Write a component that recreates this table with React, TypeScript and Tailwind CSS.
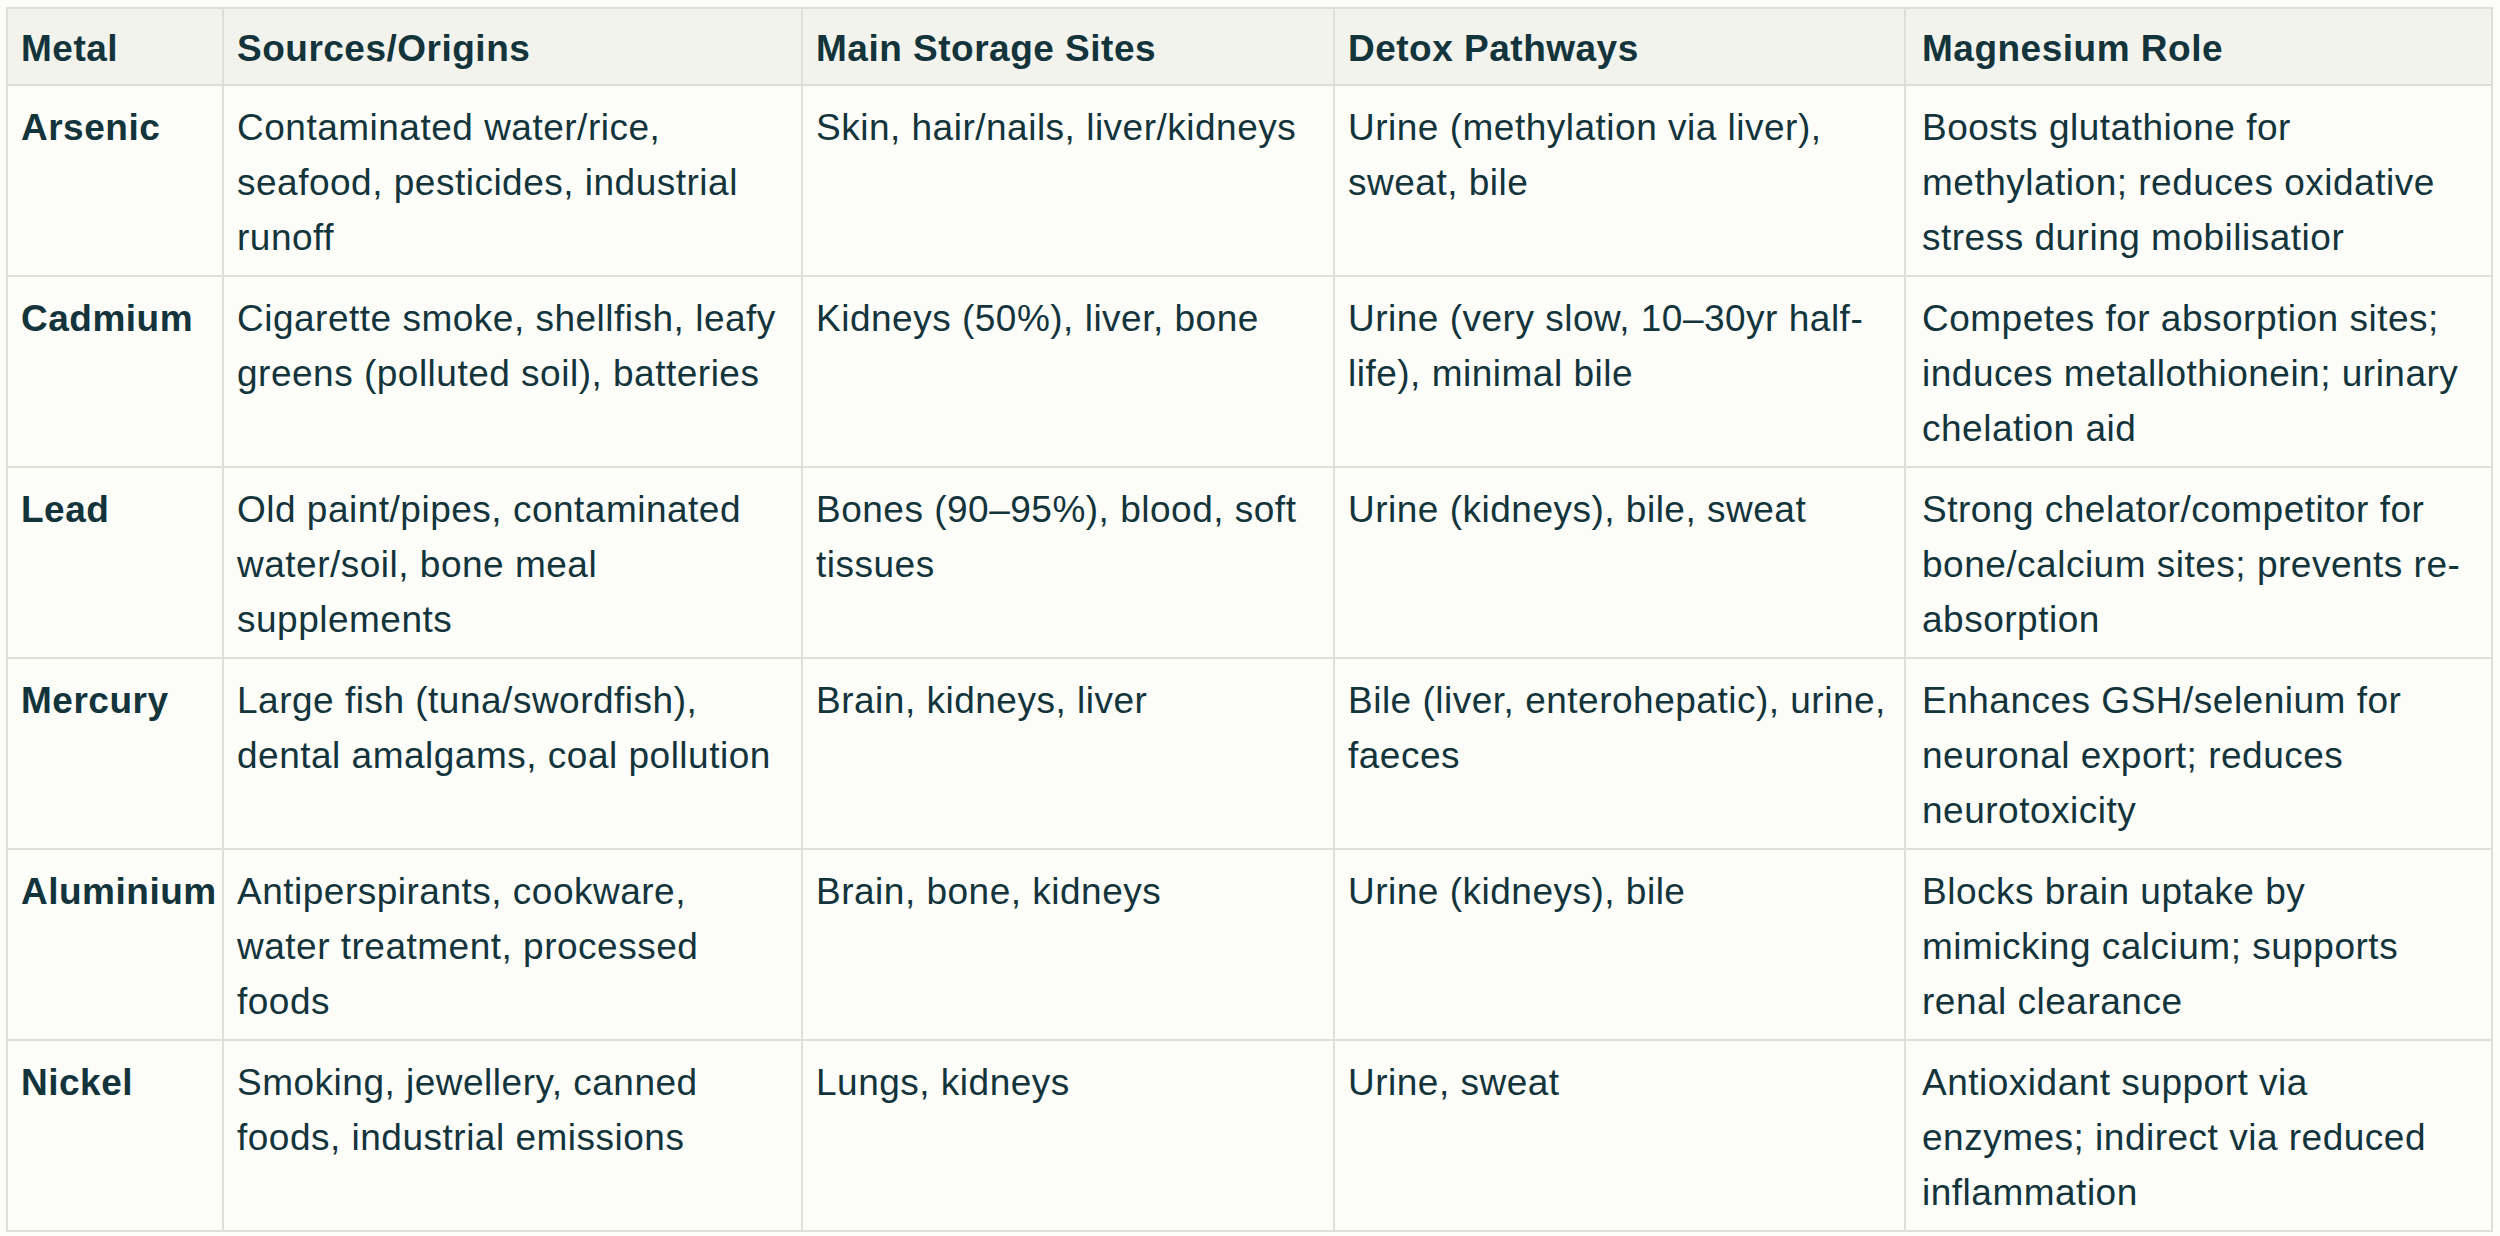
import React from "react";

type Row = {
  metal: string;
  sources: string[];
  storage: string[];
  detox: string[];
  magnesium: string[];
};

const headers = ["Metal", "Sources/Origins", "Main Storage Sites", "Detox Pathways", "Magnesium Role"];

// line breaks kept as in the screenshot so the wrapping matches
const rows: Row[] = [
  {
    metal: "Arsenic",
    sources: ["Contaminated water/rice,", "seafood, pesticides, industrial", "runoff"],
    storage: ["Skin, hair/nails, liver/kidneys"],
    detox: ["Urine (methylation via liver),", "sweat, bile"],
    magnesium: ["Boosts glutathione for", "methylation; reduces oxidative", "stress during mobilisatior"],
  },
  {
    metal: "Cadmium",
    sources: ["Cigarette smoke, shellfish, leafy", "greens (polluted soil), batteries"],
    storage: ["Kidneys (50%), liver, bone"],
    detox: ["Urine (very slow, 10–30yr half-", "life), minimal bile"],
    magnesium: ["Competes for absorption sites;", "induces metallothionein; urinary", "chelation aid"],
  },
  {
    metal: "Lead",
    sources: ["Old paint/pipes, contaminated", "water/soil, bone meal", "supplements"],
    storage: ["Bones (90–95%), blood, soft", "tissues"],
    detox: ["Urine (kidneys), bile, sweat"],
    magnesium: ["Strong chelator/competitor for", "bone/calcium sites; prevents re-", "absorption"],
  },
  {
    metal: "Mercury",
    sources: ["Large fish (tuna/swordfish),", "dental amalgams, coal pollution"],
    storage: ["Brain, kidneys, liver"],
    detox: ["Bile (liver, enterohepatic), urine,", "faeces"],
    magnesium: ["Enhances GSH/selenium for", "neuronal export; reduces", "neurotoxicity"],
  },
  {
    metal: "Aluminium",
    sources: ["Antiperspirants, cookware,", "water treatment, processed", "foods"],
    storage: ["Brain, bone, kidneys"],
    detox: ["Urine (kidneys), bile"],
    magnesium: ["Blocks brain uptake by", "mimicking calcium; supports", "renal clearance"],
  },
  {
    metal: "Nickel",
    sources: ["Smoking, jewellery, canned", "foods, industrial emissions"],
    storage: ["Lungs, kidneys"],
    detox: ["Urine, sweat"],
    magnesium: ["Antioxidant support via", "enzymes; indirect via reduced", "inflammation"],
  },
];

const padX = ["pl-[13px] pr-2", "pl-[13px] pr-2", "pl-[13px] pr-2", "pl-[13px] pr-2", "pl-4 pr-2"];

function Lines({ lines }: { lines: string[] }) {
  return (
    <>
      {lines.map((l, i) => (
        <React.Fragment key={i}>
          {i > 0 && <br />}
          {l}
        </React.Fragment>
      ))}
    </>
  );
}

export default function App() {
  return (
    <div className="min-h-screen bg-[#fcfcf9] pt-[7px] pl-[6px]">
      <div
        className="grid w-[2487px] grid-cols-[214px_577px_530px_569px_585px] gap-[2px] bg-[#dfdfd8] p-[2px] font-['Liberation_Sans',Arial,sans-serif] text-[37px] leading-[55px] tracking-[0.5px] text-[#13343b]"
      >
        {headers.map((h, i) => (
          <div
            key={h}
            className={`bg-[#f3f3ee] pt-3 pb-2 font-bold whitespace-nowrap ${padX[i]}`}
          >
            {h}
          </div>
        ))}

        {rows.map((r) => (
          <React.Fragment key={r.metal}>
            <div className={`h-[189px] bg-[#fcfcf9] pt-[14px] font-bold whitespace-nowrap ${padX[0]}`}>
              {r.metal}
            </div>
            <div className={`bg-[#fcfcf9] pt-[14px] whitespace-nowrap ${padX[1]}`}>
              <Lines lines={r.sources} />
            </div>
            <div className={`bg-[#fcfcf9] pt-[14px] whitespace-nowrap ${padX[2]}`}>
              <Lines lines={r.storage} />
            </div>
            <div className={`bg-[#fcfcf9] pt-[14px] whitespace-nowrap ${padX[3]}`}>
              <Lines lines={r.detox} />
            </div>
            <div className={`bg-[#fcfcf9] pt-[14px] whitespace-nowrap ${padX[4]}`}>
              <Lines lines={r.magnesium} />
            </div>
          </React.Fragment>
        ))}
      </div>
    </div>
  );
}
